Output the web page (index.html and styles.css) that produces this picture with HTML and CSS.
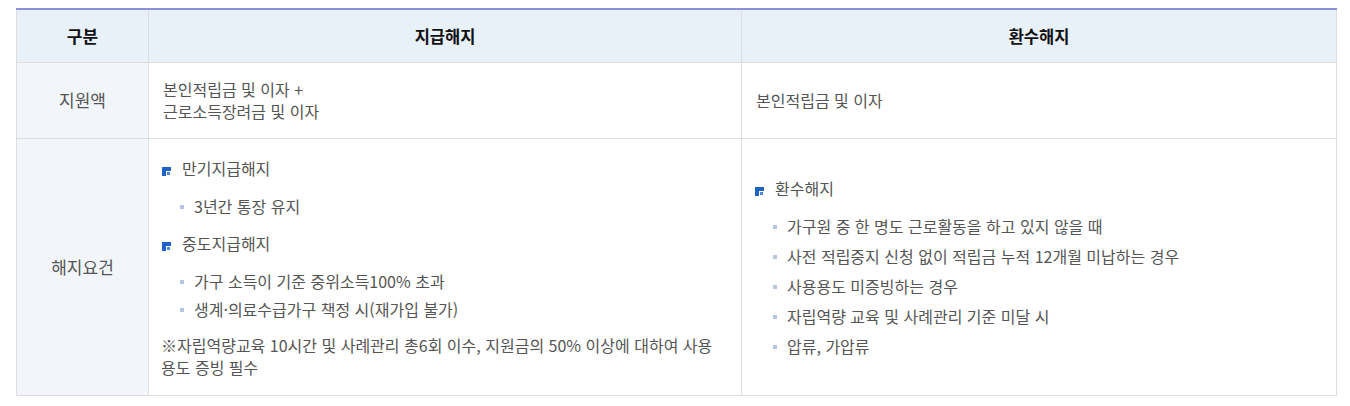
FILE: index.html
```html
<!DOCTYPE html>
<html lang="ko">
<head>
<meta charset="utf-8">
<link rel="stylesheet" href="styles.css">
</head>
<body>
<div class="wrap">
<table class="tbl">
  <colgroup><col class="c1"><col class="c2"><col class="c3"></colgroup>
  <thead>
    <tr><th>구분</th><th>지급해지</th><th>환수해지</th></tr>
  </thead>
  <tbody>
    <tr class="r-amount">
      <th>지원액</th>
      <td>본인적립금 및 이자 +<br>근로소득장려금 및 이자</td>
      <td>본인적립금 및 이자</td>
    </tr>
    <tr class="r-cond">
      <th>해지요건</th>
      <td class="top">
        <ul class="terms">
          <li class="term"><svg class="ico" viewBox="0 0 9 9" width="9" height="9"><rect width="9" height="9" fill="#1f63c6"/><rect x="4" y="4" width="5" height="5" fill="#fff"/><rect x="5" y="5" width="3" height="3" fill="#4a8ae0"/></svg>만기지급해지
            <ul class="sub"><li>3년간 통장 유지</li></ul>
          </li>
          <li class="term"><svg class="ico" viewBox="0 0 9 9" width="9" height="9"><rect width="9" height="9" fill="#1f63c6"/><rect x="4" y="4" width="5" height="5" fill="#fff"/><rect x="5" y="5" width="3" height="3" fill="#4a8ae0"/></svg>중도지급해지
            <ul class="sub">
              <li>가구 소득이 기준 중위소득100% 초과</li>
              <li>생계·의료수급가구 책정 시(재가입 불가)</li>
            </ul>
          </li>
        </ul>
        <p class="note">※자립역량교육 10시간 및 사례관리 총6회 이수, 지원금의 50% 이상에 대하여 사용 용도 증빙 필수</p>
      </td>
      <td>
        <ul class="terms">
          <li class="term"><svg class="ico" viewBox="0 0 9 9" width="9" height="9"><rect width="9" height="9" fill="#1f63c6"/><rect x="4" y="4" width="5" height="5" fill="#fff"/><rect x="5" y="5" width="3" height="3" fill="#4a8ae0"/></svg>환수해지
            <ul class="sub wide">
              <li>가구원 중 한 명도 근로활동을 하고 있지 않을 때</li>
              <li>사전 적립중지 신청 없이 적립금 누적 12개월 미납하는 경우</li>
              <li>사용용도 미증빙하는 경우</li>
              <li>자립역량 교육 및 사례관리 기준 미달 시</li>
              <li>압류, 가압류</li>
            </ul>
          </li>
        </ul>
      </td>
    </tr>
  </tbody>
</table>
</div>
</body>
</html>
```

FILE: styles.css
```css
* { box-sizing: border-box; }
html, body { margin: 0; padding: 0; background: #fff; }
body {
  font-family: "Noto Sans CJK KR", "Noto Sans", sans-serif;
  color: #555;
}
.wrap { padding: 8px 14px 0 16px; }
.tbl {
  width: 1320px;
  border-collapse: collapse;
  border-top: 2px solid #8b90db;
  table-layout: fixed;
}
.c1 { width: 132px; }
.c2 { width: 593px; }
.c3 { width: 595px; }
.tbl th, .tbl td {
  border: 1px solid #dedede;
  font-size: 16px;
  letter-spacing: 0;
  line-height: 22px;
  vertical-align: middle;
}
.tbl thead th {
  background: #e8f0f8;
  height: 53px;
  font-size: 16.5px;
  font-weight: 700;
  color: #111;
  text-align: center;
  padding: 0;
}
.tbl thead th:first-child { font-size: 17px; }
.tbl tbody th {
  background: #f2f5f9;
  font-weight: 400;
  font-size: 17px;
  color: #555;
  text-align: center;
  padding: 0;
}
.tbl tbody td { padding: 0 14px; text-align: left; }
.tbl .r-amount th, .tbl .r-amount td { height: 76px; }
.tbl .r-cond td { padding-top: 18px; padding-bottom: 17px; }
.tbl .r-cond td.top { vertical-align: top; }
.terms, .sub { list-style: none; margin: 0; padding: 0; }
.term { line-height: 22px; }
.term + .term { margin-top: 15px; }
.ico { display: inline-block; vertical-align: -1px; margin-right: 11px; margin-left: -1px; }
.sub { margin-top: 16px; padding-left: 17px; }
.sub li { line-height: 22px; }
.sub li + li { margin-top: 6px; }
.sub.wide li + li { margin-top: 8px; }
.sub li::before {
  content: "";
  display: inline-block;
  width: 4px;
  height: 4px;
  background: #b4c6df;
  vertical-align: 4px;
  margin-right: 10px;
}
.note { margin: 14px 0 0 -2px; line-height: 22px; }
```
